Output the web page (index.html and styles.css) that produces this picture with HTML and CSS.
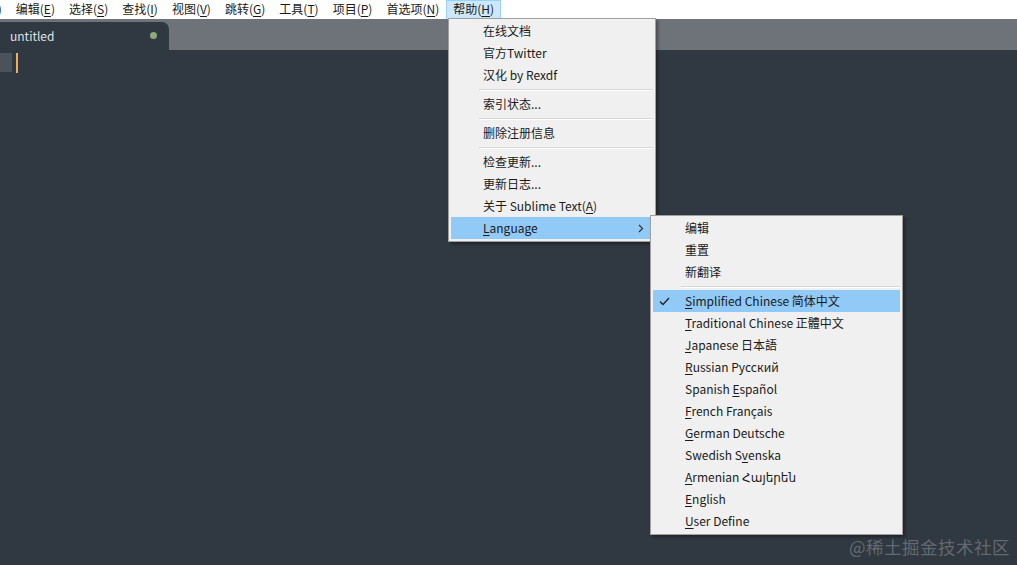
FILE: index.html
```html
<!DOCTYPE html>
<html lang="zh-CN">
<head>
  <meta charset="UTF-8">
  <title>untitled - Sublime Text</title>
  <link rel="stylesheet" href="styles.css">
</head>
<body>
  <!-- Menu bar -->
  <div class="menubar">
    <span class="menubar-item clipped">文件(<u>F</u>)</span>
    <span class="menubar-item">编辑(<u>E</u>)</span>
    <span class="menubar-item">选择(<u>S</u>)</span>
    <span class="menubar-item">查找(<u>I</u>)</span>
    <span class="menubar-item">视图(<u>V</u>)</span>
    <span class="menubar-item">跳转(<u>G</u>)</span>
    <span class="menubar-item">工具(<u>T</u>)</span>
    <span class="menubar-item">项目(<u>P</u>)</span>
    <span class="menubar-item">首选项(<u>N</u>)</span>
    <span class="menubar-item active">帮助(<u>H</u>)</span>
  </div>

  <!-- Tabs -->
  <div class="tabbar">
    <div class="tab">
      <span class="tab-title">untitled</span>
      <span class="tab-dot"></span>
    </div>
  </div>

  <!-- Editor -->
  <div class="editor">
    <div class="gutter-line"></div>
    <div class="caret"></div>
  </div>

  <!-- Help menu -->
  <div class="menu help-menu">
    <div class="menu-item">在线文档</div>
    <div class="menu-item">官方Twitter</div>
    <div class="menu-item">汉化 by Rexdf</div>
    <div class="menu-sep"></div>
    <div class="menu-item">索引状态...</div>
    <div class="menu-sep"></div>
    <div class="menu-item">删除注册信息</div>
    <div class="menu-sep"></div>
    <div class="menu-item">检查更新...</div>
    <div class="menu-item">更新日志...</div>
    <div class="menu-item">关于 Sublime Text(<u>A</u>)</div>
    <div class="menu-item selected"><u>L</u>anguage<span class="submenu-arrow">
      <svg width="6" height="9" viewBox="0 0 6 9"><path d="M1 1 L4.5 4.5 L1 8" fill="none" stroke="#333" stroke-width="1.2"/></svg>
    </span></div>
  </div>

  <!-- Language submenu -->
  <div class="menu lang-menu">
    <div class="menu-item">编辑</div>
    <div class="menu-item">重置</div>
    <div class="menu-item">新翻译</div>
    <div class="menu-sep"></div>
    <div class="menu-item selected">
      <span class="check">
        <svg width="11" height="9" viewBox="0 0 11 9"><path d="M1 4.5 L4 7.5 L10 1" fill="none" stroke="#222" stroke-width="1.3"/></svg>
      </span><u>S</u>implified Chinese 简体中文
    </div>
    <div class="menu-item"><u>T</u>raditional Chinese 正體中文</div>
    <div class="menu-item"><u>J</u>apanese 日本語</div>
    <div class="menu-item"><u>R</u>ussian Русский</div>
    <div class="menu-item">Spanish <u>E</u>spañol</div>
    <div class="menu-item"><u>F</u>rench Français</div>
    <div class="menu-item"><u>G</u>erman Deutsche</div>
    <div class="menu-item">Swedish S<u>v</u>enska</div>
    <div class="menu-item"><u>A</u>rmenian Հայերեն</div>
    <div class="menu-item"><u>E</u>nglish</div>
    <div class="menu-item"><u>U</u>ser Define</div>
  </div>

  <div class="watermark">@稀土掘金技术社区</div>
</body>
</html>
```

FILE: styles.css
```css
* {
  margin: 0;
  padding: 0;
  box-sizing: border-box;
}

body {
  width: 1017px;
  height: 565px;
  overflow: hidden;
  background-color: #303841;
  font-family: "Noto Sans CJK SC", "DejaVu Sans", sans-serif;
  font-size: 12px;
  color: #1a1a1a;
  position: relative;
}

u {
  text-decoration: underline;
  text-underline-offset: 2px;
}

/* Menu bar */
.menubar {
  height: 19px;
  background-color: #ffffff;
  display: flex;
  align-items: stretch;
  white-space: nowrap;
  overflow: hidden;
}

.menubar-item {
  padding: 0 6px;
  line-height: 18px;
  border: 1px solid transparent;
  border-top: none;
  border-bottom: none;
}

/* only the closing bracket of the first menu shows */
.menubar-item.clipped {
  margin-left: -44px;
}

.menubar-item.active {
  background-color: #cce8ff;
  border-color: #99d1ff;
  border-top: 1px solid #99d1ff;
  line-height: 16px;
}

/* Tabs */
.tabbar {
  height: 31px;
  background-color: #6e737a;
  padding-top: 3px;
  display: flex;
}

.tab {
  width: 169px;
  background-color: #303841;
  border-radius: 0 7px 0 0;
  display: flex;
  align-items: center;
  justify-content: space-between;
  padding: 0 12px 2px 10px;
}

.tab-title {
  color: #dfe3e8;
  font-size: 12px;
}

.tab-dot {
  width: 7px;
  height: 7px;
  border-radius: 50%;
  background-color: #8fa97a;
}

/* Editor */
.editor {
  display: flex;
  padding-top: 3px;
}

.gutter-line {
  width: 12px;
  height: 19px;
  background-color: #4a525c;
}

.caret {
  width: 2px;
  height: 20px;
  margin-left: 4px;
  background-color: #f3ad52;
}

/* Dropdown menus */
.menu {
  position: absolute;
  background-color: #f0f0f0;
  border: 1px solid #a0a0a0;
  padding: 1px 2px 2px;
  box-shadow: 2px 2px 3px rgba(0, 0, 0, 0.35);
  white-space: nowrap;
}

.help-menu {
  left: 448px;
  top: 18px;
  width: 208px;
}

.lang-menu {
  left: 650px;
  top: 215px;
  width: 253px;
}

.menu-item {
  position: relative;
  height: 22px;
  line-height: 22px;
  padding-left: 32px;
  color: #1a1a1a;
}

.menu-item.selected {
  background-color: #91c9f7;
}

.menu-sep {
  height: 1px;
  background-color: #d7d7d7;
  margin: 3px 0 2px 28px;
  border-bottom: 1px solid #ffffff;
  box-sizing: content-box;
}

.submenu-arrow {
  position: absolute;
  right: 9px;
  top: 0;
  display: flex;
  align-items: center;
  height: 22px;
}

.check {
  position: absolute;
  left: 6px;
  top: 0;
  height: 22px;
  display: flex;
  align-items: center;
}

.watermark {
  position: absolute;
  right: 7px;
  bottom: 6px;
  font-size: 17.5px;
  color: rgba(255, 255, 255, 0.26);
  letter-spacing: 0.5px;
}
```
